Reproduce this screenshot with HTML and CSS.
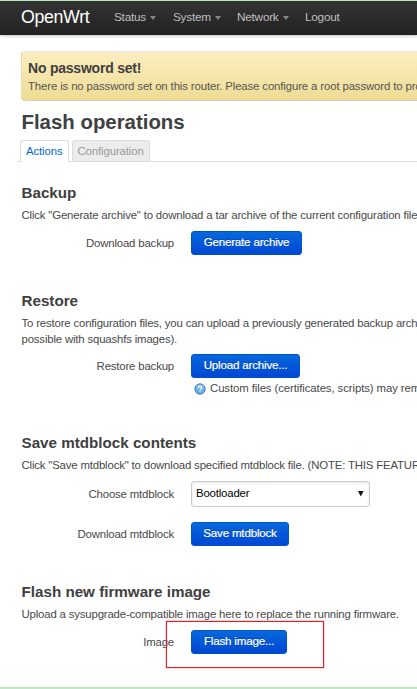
FILE: index.html
```html
<!DOCTYPE html>
<html lang="en">
<head>
<meta charset="utf-8">
<title>OpenWrt - Flash operations</title>
<link rel="stylesheet" href="styles.css">
</head>
<body>
<header class="topbar">
  <a class="brand">OpenWrt</a>
  <nav class="nav">
    <a class="menu status">Status<i class="caret"></i></a>
    <a class="menu system">System<i class="caret"></i></a>
    <a class="menu network">Network<i class="caret"></i></a>
    <a class="menu logout">Logout</a>
  </nav>
</header>
<main class="container">
  <div class="alert">
    <h4>No password set!</h4>
    <p>There is no password set on this router. Please configure a root password to pro</p>
  </div>
  <h2>Flash operations</h2>
  <ul class="tabs">
    <li class="tab active">Actions</li>
    <li class="tab">Configuration</li>
  </ul>
  <section class="section backup">
    <h3>Backup</h3>
    <p class="descr">Click "Generate archive" to download a tar archive of the current configuration file</p>
    <div class="row">
      <label class="label">Download backup</label>
      <button class="btn generate">Generate archive</button>
    </div>
  </section>
  <section class="section restore">
    <h3>Restore</h3>
    <p class="descr">To restore configuration files, you can upload a previously generated backup arch<br>possible with squashfs images).</p>
    <div class="row">
      <label class="label">Restore backup</label>
      <button class="btn upload">Upload archive...</button>
    </div>
    <div class="help">
      <svg class="help-icon" viewBox="0 0 12 12">
        <defs><linearGradient id="ball" x1="0" y1="0" x2="0" y2="1"><stop offset="0" stop-color="#8fc4ee"/><stop offset="1" stop-color="#5aa3dd"/></linearGradient></defs>
        <circle cx="6" cy="6" r="5.2" fill="url(#ball)" stroke="#3b78b2" stroke-width=".9"/>
        <path d="M4.3 4.7C4.4 2.8 7.8 2.9 7.7 4.7C7.6 5.7 6.1 5.8 6.1 7.1M6.1 8.2V9.2" fill="none" stroke="#fff" stroke-width="1.2"/>
      </svg>
      <span>Custom files (certificates, scripts) may rem</span>
    </div>
  </section>
  <section class="section mtd">
    <h3>Save mtdblock contents</h3>
    <p class="descr">Click "Save mtdblock" to download specified mtdblock file. (NOTE: THIS FEATUR</p>
    <div class="row">
      <label class="label">Choose mtdblock</label>
      <div class="select"><span>Bootloader</span><svg class="arrow" viewBox="0 0 6 6"><path d="M0 0H5.6L2.8 5.6Z" fill="#111"/></svg></div>
    </div>
    <div class="row second">
      <label class="label">Download mtdblock</label>
      <button class="btn save">Save mtdblock</button>
    </div>
  </section>
  <section class="section flash">
    <h3>Flash new firmware image</h3>
    <p class="descr">Upload a sysupgrade-compatible image here to replace the running firmware.</p>
    <div class="row">
      <label class="label">Image</label>
      <button class="btn flash-btn">Flash image...</button>
      <div class="highlight"></div>
    </div>
  </section>
</main>
<footer class="bottom-line"></footer>
</body>
</html>
```
FILE: styles.css
```css
* { box-sizing: border-box; }
html, body { margin: 0; height: 689px; overflow: hidden; }
body {
  display: flex;
  flex-direction: column;
  background: #fff;
  color: #484848;
  font: 11.4px/15.6px "Liberation Sans", Arial, sans-serif;
  letter-spacing: -.17px;
}
h2, h3, h4, p, ul { margin: 0; padding: 0; }
p, h2, h3, h4 { white-space: nowrap; }
h2, h3, h4 { color: #404040; letter-spacing: 0; }

.topbar {
  flex: none;
  display: flex;
  align-items: center;
  height: 35px;
  padding-left: 21px;
  border-top: 1px solid #b9e6be;
  background: linear-gradient(#333, #222);
  box-shadow: 0 1px 3px rgba(0, 0, 0, .25);
}
.brand { width: 93px; color: #fff; font-size: 17.8px; letter-spacing: -.35px; line-height: 20px; padding-bottom: 3px; }
.nav { display: flex; color: #bfbfbf; font-size: 11.8px; letter-spacing: -.25px; }
.menu { display: flex; align-items: center; }
.status { width: 59px; }
.system { width: 64px; }
.network { width: 68px; }
.caret {
  margin-left: 4px;
  border: 3px solid transparent;
  border-top: 4px solid #858585;
  border-bottom: 0;
}

.container { flex: 1; min-height: 0; padding: 16px 0 0 21px; overflow: hidden; }
.alert {
  width: 814px;
  height: 50px;
  padding: 6px 6px 0;
  border: 1px solid #e6dca6;
  border-top-color: #e8e8e8;
  border-bottom-color: #d5d0bd;
  border-radius: 4px;
  background: linear-gradient(#fceec1, #eedc94);
}
.alert h4 { font-size: 14px; letter-spacing: -.22px; line-height: 20px; }
.alert p { line-height: 16px; color: #555; letter-spacing: -.13px; }
h2 { margin-top: 7px; padding-left: .5px; font-size: 20.4px; line-height: 28px; }
.tabs {
  display: flex;
  align-items: flex-end;
  height: 26px;
  margin: 0 0 0 -4px;
  padding-left: 3px;
  border-bottom: 1px solid #ddd;
  list-style: none;
}
.tab {
  height: 21px;
  margin-right: 3px;
  padding: 0 5px;
  border: 1px solid #ddd;
  border-bottom: 0;
  border-radius: 3px 3px 0 0;
  background: #ececec;
  color: #999;
  line-height: 20px;
  letter-spacing: -.12px;
}
.tab.active { height: 22px; margin-bottom: -1px; background: #fff; color: #0069d6; }

.section { padding-left: .5px; }
.section h3 { position: relative; top: 1px; font-size: 15.2px; line-height: 20px; }
.descr { margin-top: 6px; }
.backup { height: 108px; margin-top: 20px; }
.restore { height: 142px; }
.restore .row { margin-top: 6px; }
.mtd { height: 149px; }
.row { position: relative; display: flex; align-items: center; height: 25px; margin-top: 7px; }
.label { width: 152.5px; margin-right: 17px; padding-top: 2px; text-align: right; letter-spacing: -.17px; }
.btn {
  height: 24px;
  padding: 0 0 2px;
  border: 1px solid #0052d0;
  border-radius: 3px;
  background: linear-gradient(#0668dc, #0047d3);
  color: #fff;
  font: inherit;
  font-size: 11.6px;
  letter-spacing: -.2px;
  -webkit-text-stroke: .2px #fff;
  text-shadow: 0 -1px 0 rgba(0, 0, 0, .25);
}
.generate { width: 111px; }
.upload { width: 109px; }
.save { width: 98px; }
.flash-btn { width: 96px; }
.help { display: flex; align-items: center; gap: 4px; height: 16px; margin: 3px 0 0 172.5px; white-space: nowrap; letter-spacing: -.1px; }
.help-icon { flex: none; width: 12px; height: 12px; }
.select {
  display: flex;
  align-items: center;
  justify-content: space-between;
  width: 179px;
  height: 26px;
  padding: 0 5px 1px 4px;
  border: 1px solid #ccc;
  border-radius: 3px;
  box-shadow: inset 0 1px 3px rgba(0, 0, 0, .1);
  color: #000;
}
.arrow { width: 6px; height: 6px; }
.mtd .row { margin-top: 8px; }
.mtd .second { margin-top: 15px; }
.highlight {
  position: absolute;
  left: 144.5px;
  top: -9px;
  width: 158px;
  height: 47px;
  border: 1px solid #ed1c24;
  box-shadow: 0 0 1px #ed1c24;
}
.bottom-line { flex: none; height: 2px; background: #c0e6c4; }
```
